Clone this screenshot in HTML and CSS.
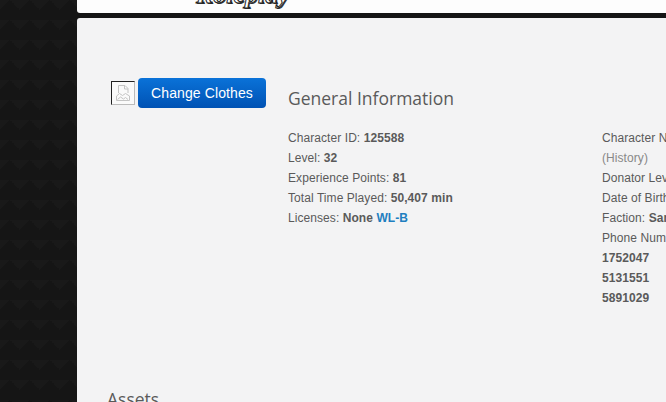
FILE: index.html
```html
<!DOCTYPE html>
<html lang="en">
<head>
    <meta charset="UTF-8">
    <meta name="viewport" content="width=device-width, initial-scale=1.0">
    <title>Character</title>
    <link rel="stylesheet" href="styles.css">
</head>
<body>
    <div class="page">
        <header class="top-bar">
            <span class="logo">Roleplay</span>
        </header>
        <main class="panel">
            <div class="profile">
                <div class="skin">
                    <span class="broken-img">
                        <svg width="18" height="18" viewBox="0 0 18 18" fill="none" stroke="#c4c4c4" stroke-width="1">
                            <path d="M4.500 9V1.500h6.500l3 3V9"/>
                            <path d="M10.500 1.500v3.500h3.500"/>
                            <path d="M2.500 12l3-2.500 3 2 3-2 4 2.500"/>
                            <path d="M2.500 12v4.500h13V12"/>
                            <path d="M3.500 15.500l3-2.500 3 2 2-1.500 2.500 2"/>
                        </svg>
                    </span>
                    <a class="btn-blue" href="#clothes">Change Clothes</a>
                </div>
                <section class="general">
                    <h2>General Information</h2>
                    <p>Character ID: <b>125588</b></p>
                    <p>Level: <b>32</b></p>
                    <p>Experience Points: <b>81</b></p>
                    <p>Total Time Played: <b>50,407 min</b></p>
                    <p>Licenses: <b>None</b> <a class="license" href="#wl">WL-B</a></p>
                </section>
                <section class="details">
                    <p>Character Name:</p>
                    <p class="muted">(History)</p>
                    <p>Donator Level:</p>
                    <p>Date of Birth:</p>
                    <p>Faction: <b>San Andreas</b></p>
                    <p>Phone Numbers:</p>
                    <p><b>1752047</b></p>
                    <p><b>5131551</b></p>
                    <p><b>5891029</b></p>
                </section>
            </div>
            <h2 class="assets">Assets</h2>
        </main>
    </div>
</body>
</html>
```

FILE: styles.css
```css
html, body {
    height: 100%;
}
body {
    margin: 0;
    overflow: hidden;
    font-family: "Liberation Sans", Arial, sans-serif;
    font-size: 12px;
    letter-spacing: 0.07px;
    color: #5a5a5a;
    background-color: #151515;
    background-image:
        linear-gradient(135deg, rgba(255, 255, 255, 0.014) 25%, transparent 25%),
        linear-gradient(225deg, rgba(255, 255, 255, 0.014) 25%, transparent 25%);
    background-size: 20px 20px;
}
.page {
    margin-left: 77px;
    width: 589px;
    height: 402px;
    overflow: hidden;
}
.top-bar {
    height: 13px;
    background-color: #fdfdfd;
    border-bottom-left-radius: 3px;
    overflow: hidden;
    position: relative;
}
.logo {
    position: absolute;
    left: 119px;
    bottom: 5px;
    font-family: "Liberation Serif", serif;
    font-style: italic;
    font-weight: bold;
    font-size: 26px;
    line-height: 26px;
    letter-spacing: 0;
    color: #fff;
    -webkit-text-stroke: 1px #222;
    text-shadow: 1px 1px 0 #333;
}
.panel {
    margin-top: 5px;
    height: 384px;
    padding: 60px 0 0 30px;
    background-color: #f3f3f4;
    border-top-left-radius: 3px;
    box-sizing: border-box;
}
.profile {
    display: grid;
    grid-template-columns: 181px 314px 200px;
    height: 310px;
}
.skin {
    display: flex;
    align-items: flex-start;
    padding-left: 4px;
    gap: 3px;
}
.broken-img {
    display: flex;
    align-items: center;
    justify-content: center;
    box-sizing: border-box;
    width: 24px;
    height: 24px;
    margin-top: 3px;
    border: 1px solid #bbb;
    border-top-color: #222;
    border-left-color: #222;
    background-color: #fafafa;
}
.btn-blue {
    display: block;
    width: 128px;
    height: 30px;
    line-height: 30px;
    text-align: center;
    font-size: 14px;
    letter-spacing: 0.1px;
    color: #fff;
    text-decoration: none;
    background: linear-gradient(#0a72d8, #0052b4);
    border-radius: 4px;
}
h2 {
    margin: 0;
    font-family: "Open Sans", sans-serif;
    font-weight: 400;
    font-size: 17.5px;
    line-height: 24px;
    letter-spacing: 0;
    color: #5a5a5a;
}
.general h2 {
    margin: 8px 0 18px;
}
.general p, .details p {
    margin: 0;
    line-height: 20px;
    white-space: nowrap;
}
.details {
    padding-top: 50px;
}
.muted {
    color: #888;
}
.license {
    color: #1f7fc0;
    font-weight: bold;
    text-decoration: none;
}
.assets {
    margin-top: -1px;
}
```
